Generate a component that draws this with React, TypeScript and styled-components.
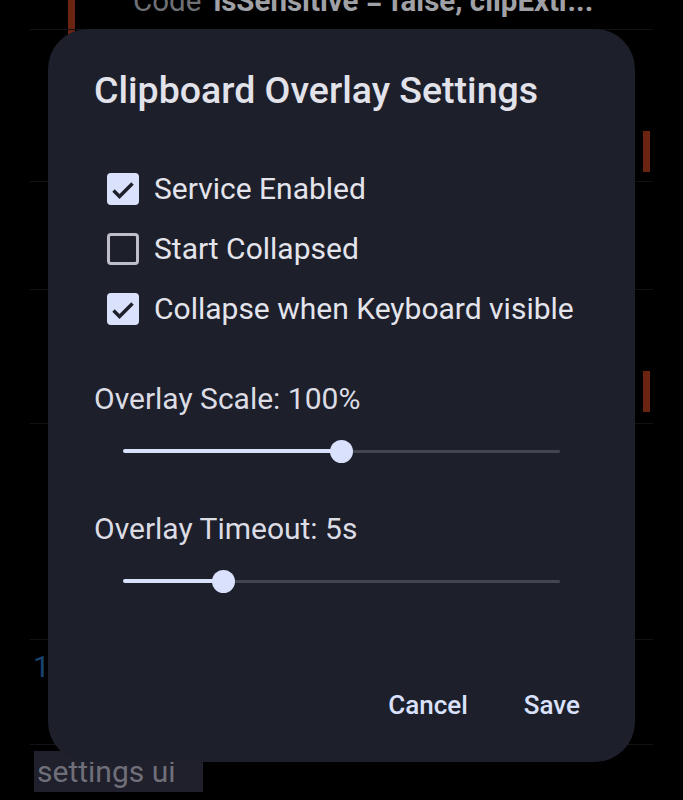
import styled, { createGlobalStyle } from "styled-components";

const GlobalStyle = createGlobalStyle`
  html, body {
    margin: 0;
    padding: 0;
    background: #000;
  }
  body {
    font-family: Roboto, "Noto Sans", sans-serif;
  }
`;

const Screen = styled.div`
  position: relative;
  width: 683px;
  height: 800px;
  overflow: hidden;
  background: #000;
`;

/* ---------- list behind the dialog ---------- */

const ListItem = styled.div<{ $h: number; $pb?: number }>`
  display: flex;
  align-items: flex-end;
  height: ${(p) => p.$h}px;
  margin: 0 30px;
  padding-bottom: ${(p) => p.$pb ?? 0}px;
  box-sizing: border-box;
  border-bottom: 1px solid #121214;
`;

const AccentBar = styled.div<{ $h?: number; $right?: boolean }>`
  flex: none;
  width: 7px;
  height: ${(p) => (p.$h ? `${p.$h}px` : "100%")};
  background: #6a2410;
  margin-left: ${(p) => (p.$right ? "auto" : "38px")};
  margin-right: ${(p) => (p.$right ? "3px" : "0")};
  align-self: ${(p) => (p.$h ? "flex-end" : "stretch")};
`;

const TopText = styled.div`
  flex: 1;
  height: 100%;
  margin-left: 58px;
  overflow: hidden;
  display: flex;
  flex-direction: column;
  justify-content: flex-end;
  padding-bottom: 13px;
  box-sizing: border-box;
`;

const TopLine = styled.div`
  font-size: 29.5px;
  line-height: 29px;
  white-space: nowrap;
  color: #a0a1a7;
  font-weight: 700;

  span {
    font-weight: 400;
    color: #6f7076;
  }
`;

const LeftBarItem = styled(ListItem)`
  align-items: stretch;
`;

const LinkNumber = styled.div`
  align-self: flex-start;
  padding: 9px 0 0 3px;
  font-size: 30px;
  line-height: 36px;
  color: #1a4470;
`;

const Chip = styled.div`
  display: inline-block;
  margin: 6px 0 0 34px;
  width: 169px;
  height: 41px;
  padding-left: 3px;
  box-sizing: border-box;
  background: #1f202c;
  color: #6f6f79;
  font-size: 30px;
  line-height: 41px;
`;

/* ---------- dialog ---------- */

const Dialog = styled.div`
  position: absolute;
  left: 48px;
  top: 29px;
  width: 587px;
  height: 733px;
  box-sizing: border-box;
  padding: 39px 43px 33px 46px;
  border-radius: 40px;
  background: #1d1f2a;
  display: flex;
  flex-direction: column;
`;

const Title = styled.h2`
  margin: 0;
  font-size: 37.5px;
  line-height: 44px;
  font-weight: 500;
  color: #e2e2ea;
  white-space: nowrap;
`;

const Options = styled.div`
  display: flex;
  flex-direction: column;
  margin-top: 47px;
`;

const CheckRow = styled.label`
  display: flex;
  align-items: center;
  height: 60px;
  padding-left: 13px;
  gap: 15px;
  cursor: pointer;
`;

const Box = styled.span<{ $on: boolean }>`
  flex: none;
  width: 32px;
  height: 32px;
  box-sizing: border-box;
  border-radius: 4px;
  display: flex;
  align-items: center;
  justify-content: center;
  background: ${(p) => (p.$on ? "#d9e1fc" : "transparent")};
  border: ${(p) => (p.$on ? "none" : "3px solid #bdbec9")};
`;

const OptionText = styled.span`
  font-size: 30px;
  line-height: 36px;
  color: #e4e4ec;
  white-space: nowrap;
`;

const SliderGroup = styled.div<{ $mt: number }>`
  display: flex;
  flex-direction: column;
  gap: 10px;
  margin-top: ${(p) => p.$mt}px;
`;

const SliderLabel = styled.div`
  font-size: 30px;
  line-height: 36px;
  color: #dcdce5;
`;

const SliderArea = styled.div`
  position: relative;
  height: 48px;
  margin-left: 29px;
  width: 437px;
  display: flex;
  align-items: center;
`;

const ActiveTrack = styled.div`
  flex: none;
  height: 4px;
  border-radius: 2px;
  background: #d9e1fc;
`;

const InactiveTrack = styled.div`
  flex: 1;
  height: 3px;
  border-radius: 2px;
  background: #434651;
`;

const Thumb = styled.div`
  position: absolute;
  top: 50%;
  width: 23px;
  height: 23px;
  margin: -11.5px 0 0 -11.5px;
  border-radius: 50%;
  background: #d9e1fc;
`;

const Actions = styled.div`
  margin-top: auto;
  display: flex;
  justify-content: flex-end;
  gap: 32px;
`;

const TextButton = styled.button`
  height: 48px;
  padding: 0 12px;
  border: none;
  background: transparent;
  font-family: Roboto, "Noto Sans", sans-serif;
  font-size: 26px;
  font-weight: 500;
  color: #d9e1fc;
  cursor: pointer;
`;

const options = [
  { label: "Service Enabled", on: true },
  { label: "Start Collapsed", on: false },
  { label: "Collapse when Keyboard visible", on: true },
];

const sliders = [
  { label: "Overlay Scale: 100%", value: 0.5, mt: 42 },
  { label: "Overlay Timeout: 5s", value: 0.231, mt: 36 },
];

const Check = () => (
  <svg width="32" height="32" viewBox="0 0 32 32">
    <polyline
      points="6.5,17.5 12.5,23.5 25.5,10.5"
      fill="none"
      stroke="#1d1f2a"
      strokeWidth="3.4"
    />
  </svg>
);

const Slider = ({ value }: { value: number }) => (
  <SliderArea>
    <ActiveTrack style={{ width: `${value * 100}%` }} />
    <InactiveTrack />
    <Thumb style={{ left: `${value * 100}%` }} />
  </SliderArea>
);

export default function App() {
  return (
    <>
      <GlobalStyle />
      <Screen>
        <LeftBarItem $h={30}>
          <AccentBar />
          <TopText>
            <TopLine>
              <span>Code </span>'isSensitive = false, clipExtr...
            </TopLine>
          </TopText>
        </LeftBarItem>
        <LeftBarItem $h={152} $pb={9}>
          <AccentBar />
          <AccentBar $right $h={41} />
        </LeftBarItem>
        <ListItem $h={108} />
        <ListItem $h={134} $pb={11}>
          <AccentBar $right $h={41} />
        </ListItem>
        <ListItem $h={216} />
        <ListItem $h={105}>
          <LinkNumber>1</LinkNumber>
        </ListItem>
        <Chip>settings ui</Chip>

        <Dialog>
          <Title>Clipboard Overlay Settings</Title>
          <Options>
            {options.map((o) => (
              <CheckRow key={o.label}>
                <Box $on={o.on}>{o.on && <Check />}</Box>
                <OptionText>{o.label}</OptionText>
              </CheckRow>
            ))}
          </Options>
          {sliders.map((s) => (
            <SliderGroup key={s.label} $mt={s.mt}>
              <SliderLabel>{s.label}</SliderLabel>
              <Slider value={s.value} />
            </SliderGroup>
          ))}
          <Actions>
            <TextButton>Cancel</TextButton>
            <TextButton>Save</TextButton>
          </Actions>
        </Dialog>
      </Screen>
    </>
  );
}
